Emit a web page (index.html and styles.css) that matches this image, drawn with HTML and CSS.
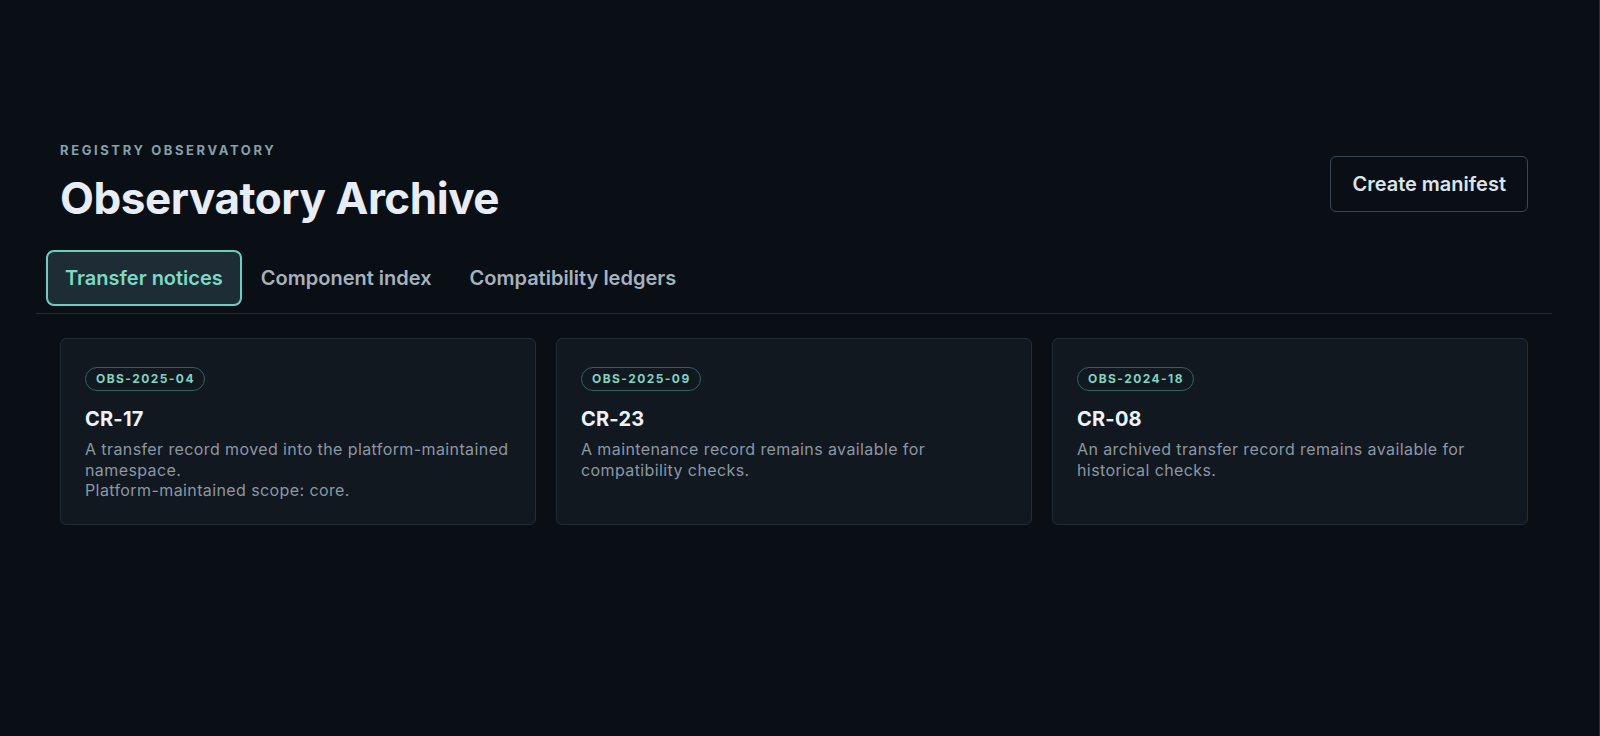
FILE: index.html
```html
<!DOCTYPE html>
<html lang="en">
<head>
    <meta charset="UTF-8">
    <meta name="viewport" content="width=device-width, initial-scale=1.0">
    <title>Observatory Archive</title>
    <link rel="stylesheet" href="styles.css">
</head>
<body>
    <div class="page">
        <header class="page-header">
            <div class="heading">
                <p class="eyebrow">Registry observatory</p>
                <h1>Observatory Archive</h1>
            </div>
            <button class="btn-outline" type="button">Create manifest</button>
        </header>

        <nav class="tabs">
            <button class="tab active" type="button">Transfer notices</button>
            <button class="tab" type="button">Component index</button>
            <button class="tab" type="button">Compatibility ledgers</button>
        </nav>

        <section class="record-grid">
            <article class="record-card">
                <span class="badge">OBS-2025-04</span>
                <h2>CR-17</h2>
                <p>A transfer record moved into the platform-maintained namespace.<br>Platform-maintained scope: core.</p>
            </article>
            <article class="record-card">
                <span class="badge">OBS-2025-09</span>
                <h2>CR-23</h2>
                <p>A maintenance record remains available for compatibility checks.</p>
            </article>
            <article class="record-card">
                <span class="badge">OBS-2024-18</span>
                <h2>CR-08</h2>
                <p>An archived transfer record remains available for historical checks.</p>
            </article>
        </section>
    </div>
</body>
</html>
```

FILE: styles.css
```css
* {
    box-sizing: border-box;
}
html, body {
    margin: 0;
    height: 100%;
}
body {
    background-color: #0a0f16;
    color: #e6ebf2;
    font-family: Inter, "Noto Sans", "Liberation Sans", sans-serif;
}
.page {
    min-height: 100%;
    padding: 142px 48px 0 36px;
    box-shadow: inset -1px 0 0 #2a3038;
}
.page-header {
    display: flex;
    align-items: center;
    justify-content: space-between;
    padding: 0 24px;
}
.eyebrow {
    margin: 0 0 16px;
    font-size: 13px;
    line-height: 16px;
    font-weight: 700;
    letter-spacing: 0.2em;
    text-transform: uppercase;
    color: #86a0ab;
}
h1 {
    margin: 0;
    font-size: 44px;
    line-height: 1.1;
    font-weight: 700;
    letter-spacing: -0.01em;
    color: #e8edf5;
}
.btn-outline {
    font: inherit;
    font-size: 20px;
    line-height: 24px;
    font-weight: 600;
    color: #dbe4ec;
    background: transparent;
    border: 1px solid #3a4853;
    border-radius: 6px;
    padding: 15px 21px;
    margin-top: 4px;
}
.tabs {
    display: flex;
    margin-top: 28px;
    padding: 0 10px 7px;
    border-bottom: 1px solid #232d37;
}
.tab {
    font: inherit;
    font-size: 20px;
    line-height: 24px;
    font-weight: 600;
    color: #a7b1bd;
    background: transparent;
    border: 2px solid transparent;
    border-radius: 8px;
    padding: 14px 17px;
}
.tab.active {
    color: #7ed8c6;
    background-color: #1d2c35;
    border-color: #6ccfbe;
}
.record-grid {
    display: grid;
    grid-template-columns: repeat(3, 1fr);
    gap: 20px;
    margin-top: 24px;
    padding: 0 24px;
}
.record-card {
    background-color: #111820;
    border: 1px solid #232d38;
    border-radius: 6px;
    padding: 28px 24px 23px;
}
.badge {
    display: inline-block;
    font-size: 12px;
    line-height: 22px;
    font-weight: 700;
    letter-spacing: 0.12em;
    color: #7fd3c2;
    border: 1px solid #2f645f;
    border-radius: 999px;
    padding: 0 9px 0 10px;
}
.record-card h2 {
    margin: 16px 0 8px;
    font-size: 20px;
    line-height: 24px;
    font-weight: 700;
    letter-spacing: 0.01em;
    color: #eef2f7;
}
.record-card p {
    margin: 0;
    font-size: 16px;
    line-height: 20.5px;
    letter-spacing: 0.025em;
    color: #8c97a4;
}
```
